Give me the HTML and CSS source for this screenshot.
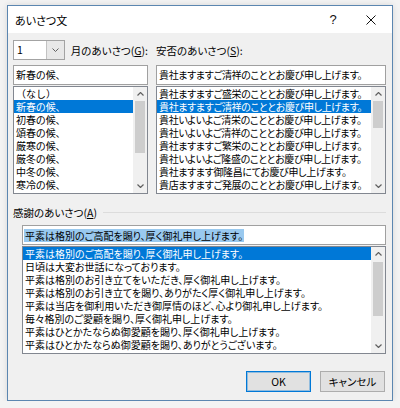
FILE: index.html
```html
<!DOCTYPE html>
<html lang="ja">
<head>
<meta charset="utf-8">
<title>あいさつ文</title>
<link rel="stylesheet" href="styles.css">
</head>
<body>
<div class="window">
  <div class="titlebar">
    <span class="title">あいさつ文</span>
    <span class="tbtn help">?</span>
    <span class="tbtn close"><svg width="10" height="10" viewBox="0 0 10 10"><path d="M0.5 0.5L9.5 9.5M9.5 0.5L0.5 9.5" stroke="#111" stroke-width="1" fill="none"/></svg></span>
  </div>
  <div class="body">
    <div class="cols">
      <div class="col col-left">
        <div class="row1">
          <div class="combo">
            <span class="combo-val">1</span>
            <span class="combo-btn"><svg width="7" height="4" viewBox="0 0 7 4"><path d="M0.5 0.5L3.5 3.5L6.5 0.5" fill="none" stroke="#606060" stroke-width="1"/></svg></span>
          </div>
          <span class="label">月のあいさつ(<u>G</u>):</span>
        </div>
        <div class="textbox">新春の候、</div>
        <div class="listbox">
          <ul class="items">
            <li><span class="nopalt">（なし）</span></li>
            <li class="sel">新春の候、</li>
            <li>初春の候、</li>
            <li>頌春の候、</li>
            <li>厳寒の候、</li>
            <li>厳冬の候、</li>
            <li>中冬の候、</li>
            <li>寒冷の候、</li>
          </ul>
          <div class="scrollbar">
            <span class="sb-arrow"><svg width="7" height="4" viewBox="0 0 7 4"><path d="M0.5 3.5L3.5 0.5L6.5 3.5" fill="none" stroke="#606060" stroke-width="1.2"/></svg></span>
            <div class="sb-track"><div class="sb-thumb" style="margin-top:0px;height:52px"></div></div>
            <span class="sb-arrow"><svg width="7" height="4" viewBox="0 0 7 4"><path d="M0.5 0.5L3.5 3.5L6.5 0.5" fill="none" stroke="#606060" stroke-width="1.2"/></svg></span>
          </div>
        </div>
      </div>
      <div class="col col-right">
        <div class="row1">
          <span class="label">安否のあいさつ(<u>S</u>):</span>
        </div>
        <div class="textbox">貴社ますますご清祥のこととお慶び申し上げます。</div>
        <div class="listbox">
          <ul class="items">
            <li>貴社ますますご盛栄のこととお慶び申し上げます。</li>
            <li class="sel">貴社ますますご清祥のこととお慶び申し上げます。</li>
            <li>貴社いよいよご清栄のこととお慶び申し上げます。</li>
            <li>貴社いよいよご清祥のこととお慶び申し上げます。</li>
            <li>貴社ますますご繁栄のこととお慶び申し上げます。</li>
            <li>貴社いよいよご隆盛のこととお慶び申し上げます。</li>
            <li>貴社ますます御隆昌にてお慶び申し上げます。</li>
            <li>貴店ますますご発展のこととお慶び申し上げます。</li>
          </ul>
          <div class="scrollbar">
            <span class="sb-arrow"><svg width="7" height="4" viewBox="0 0 7 4"><path d="M0.5 3.5L3.5 0.5L6.5 3.5" fill="none" stroke="#606060" stroke-width="1.2"/></svg></span>
            <div class="sb-track"><div class="sb-thumb" style="margin-top:0px;height:27px"></div></div>
            <span class="sb-arrow"><svg width="7" height="4" viewBox="0 0 7 4"><path d="M0.5 0.5L3.5 3.5L6.5 0.5" fill="none" stroke="#606060" stroke-width="1.2"/></svg></span>
          </div>
        </div>
      </div>
    </div>

    <div class="group">
      <div class="group-head"><span class="label">感謝のあいさつ(<u>A</u>)</span><span class="rule"></span></div>
      <div class="group-body">
        <div class="textbox textbox-sel"><span class="hl">平素は格別のご高配を賜り、厚く御礼申し上げます。</span></div>
        <div class="listbox">
          <ul class="items">
            <li class="sel">平素は格別のご高配を賜り、厚く御礼申し上げます。</li>
            <li>日頃は大変お世話になっております。</li>
            <li>平素は格別のお引き立てをいただき、厚く御礼申し上げます。</li>
            <li>平素は格別のお引き立てを賜り、ありがたく厚く御礼申し上げます。</li>
            <li>平素は当店を御利用いただき御厚情のほど、心より御礼申し上げます。</li>
            <li>毎々格別のご愛顧を賜り、厚く御礼申し上げます。</li>
            <li>平素はひとかたならぬ御愛顧を賜り、厚く御礼申し上げます。</li>
            <li>平素はひとかたならぬ御愛顧を賜り、ありがとうございます。</li>
          </ul>
          <div class="scrollbar">
            <span class="sb-arrow"><svg width="7" height="4" viewBox="0 0 7 4"><path d="M0.5 3.5L3.5 0.5L6.5 3.5" fill="none" stroke="#606060" stroke-width="1.2"/></svg></span>
            <div class="sb-track"><div class="sb-thumb" style="margin-top:1px;height:54px"></div></div>
            <span class="sb-arrow"><svg width="7" height="4" viewBox="0 0 7 4"><path d="M0.5 0.5L3.5 3.5L6.5 0.5" fill="none" stroke="#606060" stroke-width="1.2"/></svg></span>
          </div>
        </div>
      </div>
    </div>

    <div class="buttons">
      <button class="btn btn-default">OK</button>
      <button class="btn">キャンセル</button>
    </div>
  </div>
</div>
</body>
</html>
```

FILE: styles.css
```css
html, body {
  margin: 0;
  padding: 0;
}
body {
  background: #f3f3f3;
  font-family: "Noto Sans CJK JP", "Noto Sans", sans-serif;
  font-size: 10.5px;
  color: #000;
  font-feature-settings: "palt";
}
.window {
  box-sizing: border-box;
  margin: 5px 0 0 7px;
  width: 386px;
  height: 396px;
  border: 1px solid #5b86b0;
  background: #f0f0f0;
  display: flex;
  flex-direction: column;
  box-shadow: 0 0 6px rgba(0, 0, 0, 0.12);
}
.titlebar {
  height: 27px;
  flex-shrink: 0;
  background: #fff;
  display: flex;
  align-items: center;
}
.title {
  flex: 1;
  padding-left: 7px;
  font-size: 11px;
}
.tbtn {
  width: 38px;
  height: 27px;
  display: flex;
  align-items: center;
  justify-content: center;
}
.help {
  font-family: "Liberation Sans", sans-serif;
  font-size: 13px;
  color: #111;
}
.close {
  margin-right: 2px;
}
.body {
  flex: 1;
  padding: 7px 6px 0 5px;
  display: flex;
  flex-direction: column;
}
.cols {
  display: flex;
  gap: 8px;
}
.col-left {
  width: 135px;
}
.col-right {
  width: 230px;
}
.row1 {
  height: 20px;
  display: flex;
  align-items: center;
  margin-bottom: 5px;
}
.label {
  white-space: nowrap;
  line-height: 13px;
}
.label u {
  text-decoration-thickness: 1px;
  text-underline-offset: 1px;
}
.combo {
  box-sizing: border-box;
  width: 58px;
  height: 20px;
  border: 1px solid #a3a3a3;
  background: #fff;
  display: flex;
  margin-right: 6px;
}
.combo-val {
  flex: 1;
  padding-left: 3px;
  line-height: 18px;
}
.combo-btn {
  width: 17px;
  background: #e8e8e8;
  border-left: 1px solid #c2c2c2;
  display: flex;
  align-items: center;
  justify-content: center;
}
.textbox {
  box-sizing: border-box;
  height: 20px;
  border: 1px solid #a0a0a0;
  background: #fff;
  padding-left: 2px;
  font-size: 10px;
  line-height: 18px;
  white-space: nowrap;
  overflow: hidden;
}
.textbox-sel {
  padding-left: 1px;
  display: flex;
  align-items: center;
}
.hl {
  background: #99c9ef;
  line-height: 13px;
  padding: 0 1px;
}
.listbox {
  box-sizing: border-box;
  height: 108px;
  margin-top: 1px;
  border: 1px solid #828790;
  background: #fff;
  display: flex;
}
.items {
  list-style: none;
  margin: 0;
  padding: 0;
  flex: 1;
  min-width: 0;
  overflow: hidden;
  font-size: 10px;
}
.items li {
  height: 13px;
  line-height: 13px;
  padding-left: 2px;
  white-space: nowrap;
  overflow: hidden;
}
.items li.sel {
  background: #0078d7;
  color: #fff;
}
.col-right .items,
.col-right .textbox {
  letter-spacing: -0.35px;
}
.nopalt {
  font-feature-settings: normal;
}
.scrollbar {
  width: 14px;
  flex-shrink: 0;
  background: #f0f0f0;
  display: flex;
  flex-direction: column;
}
.sb-arrow {
  height: 14px;
  display: flex;
  align-items: center;
  justify-content: center;
}
.sb-track {
  flex: 1;
}
.sb-thumb {
  margin-left: 2px;
  margin-right: 2px;
  background: #cdcdcd;
}
.group {
  margin-top: 12px;
}
.group-head {
  height: 13px;
  display: flex;
  align-items: center;
}
.rule {
  flex: 1;
  margin-left: 6px;
  border-top: 1px solid #dcdcdc;
}
.group-body {
  margin-left: 9px;
  margin-top: 6px;
}
.buttons {
  margin-top: 17px;
  display: flex;
  justify-content: flex-end;
  gap: 9px;
  padding-right: 1px;
}
.btn {
  box-sizing: border-box;
  width: 65px;
  height: 21px;
  padding: 0;
  background: #e1e1e1;
  border: 1px solid #adadad;
  font-family: inherit;
  font-size: 10.5px;
  color: #000;
  font-feature-settings: "palt";
}
.btn-default {
  border-color: #0078d7;
  box-shadow: inset 0 0 0 1px rgba(0, 120, 215, 0.35);
}
```
